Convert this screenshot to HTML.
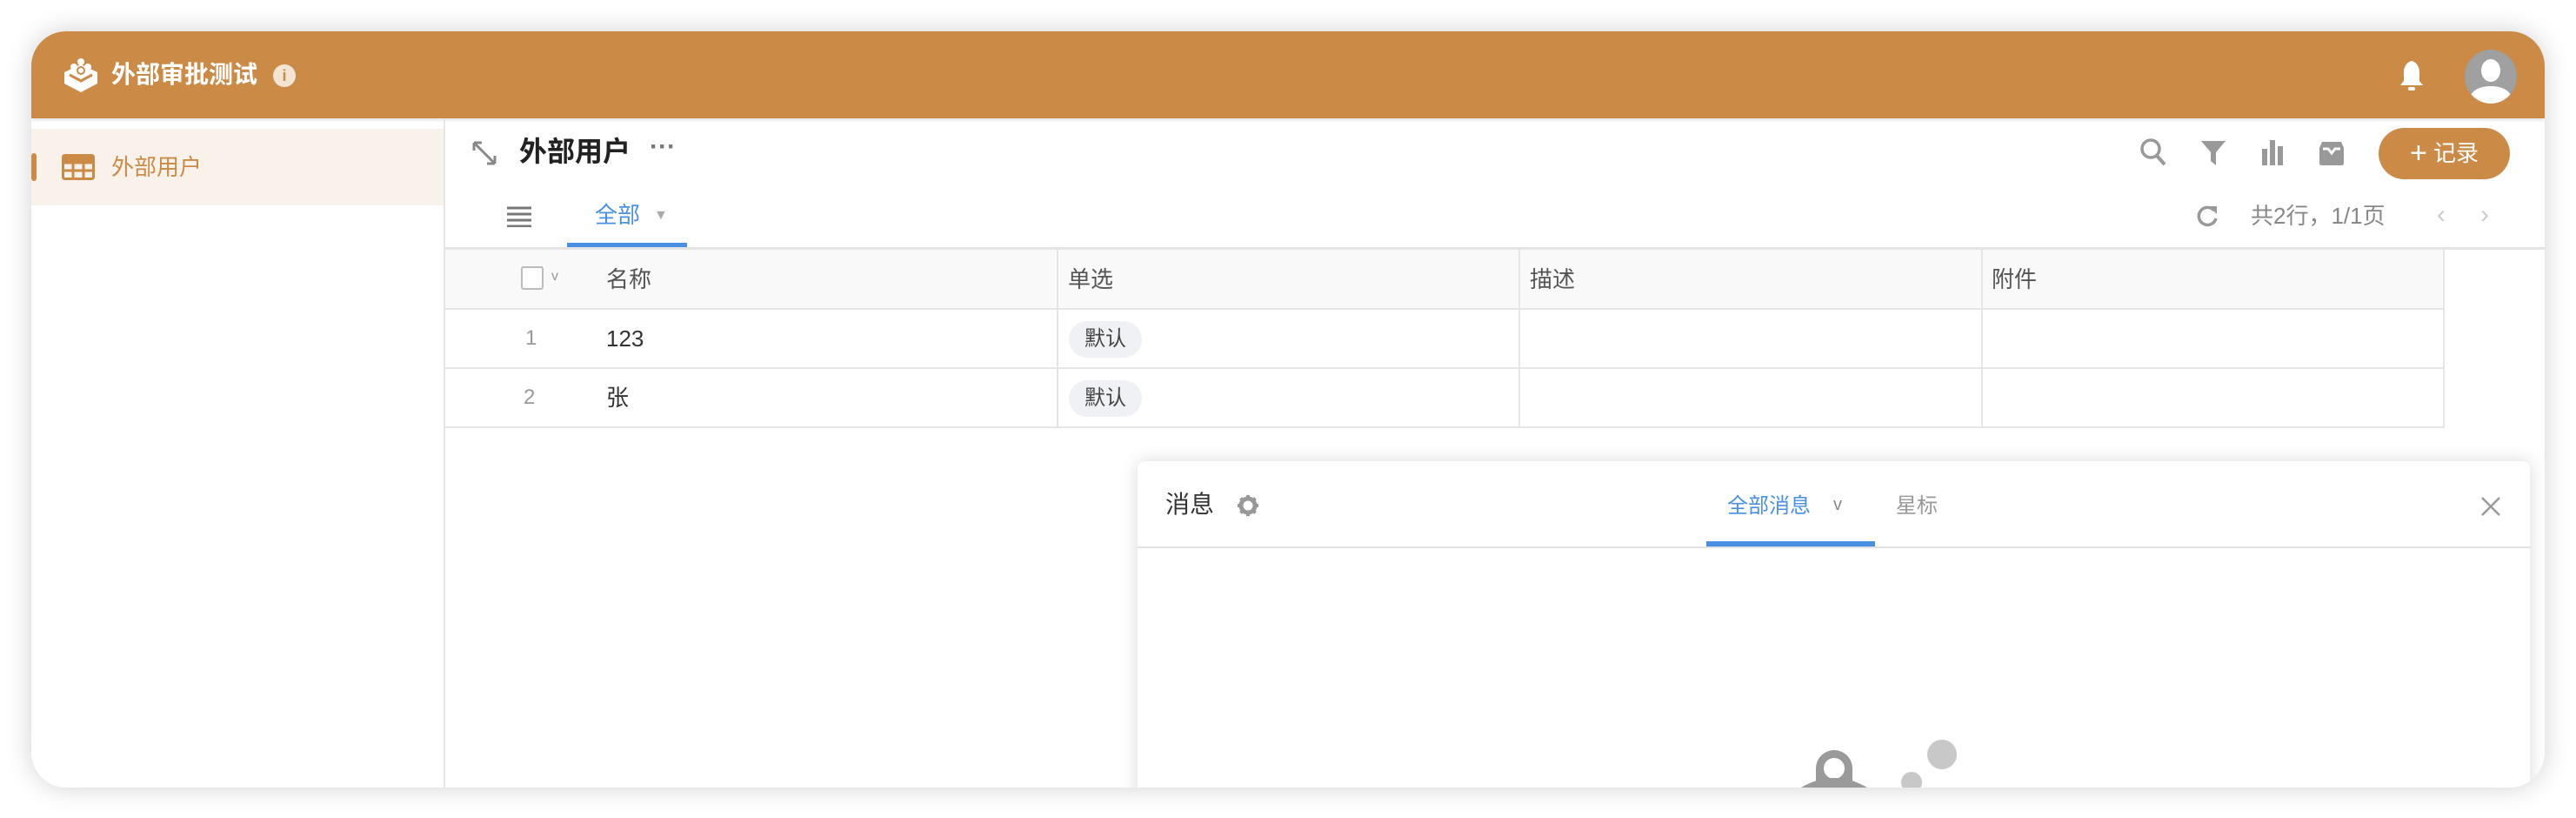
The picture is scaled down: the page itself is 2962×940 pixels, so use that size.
<!DOCTYPE html>
<html><head><meta charset="utf-8"><style>
*{box-sizing:border-box;margin:0;padding:0}
body{width:2962px;height:940px;background:#fff;position:relative;overflow:hidden;font-family:"Liberation Sans","Noto Sans CJK SC",sans-serif;}
.win{position:absolute;left:36px;top:36px;width:2890px;height:869px;border-radius:40px;overflow:hidden;background:#fff;box-shadow:0 0 30px rgba(0,0,0,0.18);}
.hdr{position:absolute;left:0;top:0;width:100%;height:100px;background:#CB8B47;box-shadow:0 2px 4px rgba(0,0,0,0.12);}
.abs{position:absolute}
.t{position:absolute;white-space:nowrap;line-height:1}
</style></head><body>
<div class="win">
 <div class="hdr">
  <svg class="abs" style="left:36px;top:30px" width="42" height="42" viewBox="0 0 42 42"><path d="M21 8 L40 17 L40 30 L21 40 L2 30 L2 17 Z" fill="#fff"/><path d="M8 20 L21 27 L34 20" stroke="#CB8B47" stroke-width="3" fill="none"/><circle cx="21" cy="5" r="4" fill="#fff"/><circle cx="13" cy="11" r="4" fill="#fff"/><circle cx="29" cy="11" r="4" fill="#fff"/><circle cx="21" cy="15" r="4" fill="#fff" stroke="#CB8B47" stroke-width="2"/></svg>
  <div class="t" style="left:92px;top:36px;font-size:28px;color:#fff;font-weight:bold">外部审批测试</div>
  <div class="abs" style="left:278px;top:38px;width:26px;height:26px;border-radius:50%;background:#f3e4d4;color:#CB8B47;font-size:18px;font-weight:bold;text-align:center;line-height:26px">i</div>
  <svg class="abs" style="left:2722px;top:32px" width="30" height="38" viewBox="0 0 30 38"><path d="M15 2 C8 4 6 10 6 16 L6 25 L2 30 L28 30 L24 25 L24 16 C24 10 22 4 15 2Z" fill="#fff"/><rect x="11" y="32" width="8" height="4" rx="2" fill="#fff"/></svg>
  <svg class="abs" style="left:2798px;top:21px" width="60" height="62" viewBox="0 0 60 62"><ellipse cx="30" cy="31" rx="30" ry="31" fill="#a0a0a0"/><clipPath id="c"><ellipse cx="30" cy="31" rx="30" ry="31"/></clipPath><g clip-path="url(#c)" fill="#fff"><ellipse cx="30" cy="24" rx="11" ry="13"/><path d="M4 58 C8 46 18 42 30 42 C42 42 52 46 56 58 L56 70 L4 70Z"/></g></svg>
 </div>
 <div class="abs" style="left:0;top:112px;width:474px;height:88px;background:#f9f2ea"></div>
 <div class="abs" style="left:0;top:140px;width:6px;height:32px;background:#CB8B47;border-radius:3px"></div>
 <svg class="abs" style="left:35px;top:141px" width="38" height="30" viewBox="0 0 38 30"><rect x="1.5" y="1.5" width="35" height="27" rx="2" fill="none" stroke="#CB8B47" stroke-width="3"/><path d="M1 10H37M1 19H37M13 10V29M25 10V29" stroke="#CB8B47" stroke-width="3"/><rect x="1" y="1" width="36" height="9" fill="#CB8B47"/></svg>
 <div class="t" style="left:92px;top:143px;font-size:26px;color:#CB8B47">外部用户</div>
 <div class="abs" style="left:474px;top:100px;width:2px;height:769px;background:#e6e6e6"></div>
 <svg class="abs" style="left:505px;top:124px" width="32" height="32" viewBox="0 0 32 32"><path d="M4 4L28 28M4 4V13M4 4H13M28 28V19M28 28H19" stroke="#888" stroke-width="3" fill="none"/></svg>
 <div class="t" style="left:561px;top:122px;font-size:32px;color:#222;font-weight:bold">外部用户</div>
 <div class="t" style="left:711px;top:118px;font-size:30px;color:#777;font-weight:bold">···</div>
 <svg class="abs" style="left:2424px;top:122px" width="32" height="34" viewBox="0 0 32 34"><circle cx="13" cy="13" r="10" stroke="#999" stroke-width="3.5" fill="none"/><path d="M20 21L29 31" stroke="#999" stroke-width="4"/></svg>
 <svg class="abs" style="left:2494px;top:125px" width="30" height="30" viewBox="0 0 30 30"><path d="M1 1H29L18 14V29L12 24V14Z" fill="#999"/></svg>
 <svg class="abs" style="left:2564px;top:124px" width="26" height="30" viewBox="0 0 26 30"><rect x="1" y="11" width="6" height="19" fill="#999"/><rect x="10" y="1" width="6" height="29" fill="#999"/><rect x="19" y="8" width="6" height="22" fill="#999"/></svg>
 <svg class="abs" style="left:2630px;top:126px" width="30" height="28" viewBox="0 0 30 28"><path d="M4 1H26L29 8V26Q29 28 26 28H4Q1 28 1 26V8Z" fill="#999"/><path d="M5 9H11L15 14L19 9H25" stroke="#fff" stroke-width="3" fill="none"/></svg>
 <div class="abs" style="left:2699px;top:111px;width:151px;height:59px;border-radius:30px;background:#CB8B47;color:#fff;font-size:26px;line-height:59px;text-align:center"><span style="font-size:34px;vertical-align:-2px">+</span> 记录</div>
 <svg class="abs" style="left:547px;top:201px" width="28" height="24" viewBox="0 0 28 24"><path d="M0 2H28M0 9H28M0 16H28M0 23H28" stroke="#777" stroke-width="3"/></svg>
 <div class="t" style="left:648px;top:198px;font-size:26px;color:#4A90E2">全部</div>
 <div class="t" style="left:716px;top:204px;font-size:16px;color:#aaa">▼</div>
 <div class="abs" style="left:616px;top:243px;width:138px;height:6px;background:#4A90E2"></div>
 <svg class="abs" style="left:2488px;top:198px" width="28" height="28" viewBox="0 0 28 28"><path d="M22 8A10 10 0 1 0 24 17" stroke="#999" stroke-width="3.5" fill="none"/><path d="M16 3H25V12Z" fill="#999"/></svg>
 <div class="t" style="left:2552px;top:199px;font-size:26px;color:#888">共2行，1/1页</div>
 <div class="t" style="left:2766px;top:196px;font-size:30px;color:#ccc">&lsaquo;</div>
 <div class="t" style="left:2816px;top:196px;font-size:30px;color:#ccc">&rsaquo;</div>
 <div class="abs" style="left:476px;top:248px;width:2414px;height:3px;background:#e4e4e4"></div>
 <div class="abs" style="left:476px;top:251px;width:2297px;height:68px;background:#f9f9f9"></div>
 <div class="abs" style="left:476px;top:318px;width:2297px;height:2px;background:#e6e6e6"></div>
 <div class="abs" style="left:476px;top:386px;width:2297px;height:2px;background:#e6e6e6"></div>
 <div class="abs" style="left:476px;top:454px;width:2297px;height:2px;background:#e6e6e6"></div>
 <div class="abs" style="left:1179px;top:251px;width:2px;height:205px;background:#e6e6e6"></div>
 <div class="abs" style="left:1710px;top:251px;width:2px;height:205px;background:#e6e6e6"></div>
 <div class="abs" style="left:2242px;top:251px;width:2px;height:205px;background:#e6e6e6"></div>
 <div class="abs" style="left:2773px;top:251px;width:2px;height:205px;background:#e6e6e6"></div>
 <div class="abs" style="left:563px;top:270px;width:26px;height:27px;border:2px solid #bbb;border-radius:3px;background:#fff"></div>
 <div class="t" style="left:598px;top:274px;font-size:16px;color:#999">v</div>
 <div class="t" style="left:661px;top:272px;font-size:26px;color:#555">名称</div>
 <div class="t" style="left:1192px;top:272px;font-size:26px;color:#555">单选</div>
 <div class="t" style="left:1723px;top:272px;font-size:26px;color:#555">描述</div>
 <div class="t" style="left:2254px;top:272px;font-size:26px;color:#555">附件</div>
 <div class="t" style="left:568px;top:341px;font-size:24px;color:#999">1</div>
 <div class="t" style="left:661px;top:340px;font-size:26px;color:#333">123</div>
 <div class="t" style="left:566px;top:409px;font-size:24px;color:#999">2</div>
 <div class="t" style="left:661px;top:408px;font-size:26px;color:#333">张</div>
 <div class="abs" style="left:1193px;top:333px;width:84px;height:42px;border-radius:21px;background:#f0f1f4;font-size:24px;color:#444;text-align:center;line-height:42px">默认</div>
 <div class="abs" style="left:1193px;top:401px;width:84px;height:42px;border-radius:21px;background:#f0f1f4;font-size:24px;color:#444;text-align:center;line-height:42px">默认</div>
 <div class="abs" style="left:1272px;top:494px;width:1601px;height:400px;background:#fff;border-radius:8px;box-shadow:0 0 20px rgba(0,0,0,0.15);overflow:hidden">
  <div class="t" style="left:32px;top:36px;font-size:28px;color:#333">消息</div>
  <svg class="abs" style="left:114px;top:38px" width="26" height="26" viewBox="0 0 26 26"><circle cx="13" cy="13" r="8" fill="none" stroke="#999" stroke-width="5"/><path d="M13 1V6M13 20V25M1 13H6M20 13H25M4.5 4.5L8 8M18 18L21.5 21.5M4.5 21.5L8 18M18 8L21.5 4.5" stroke="#999" stroke-width="4"/></svg>
  <div class="t" style="left:678px;top:40px;font-size:24px;color:#4A90E2">全部消息</div>
  <div class="t" style="left:800px;top:40px;font-size:20px;color:#888">v</div>
  <div class="t" style="left:872px;top:40px;font-size:24px;color:#999">星标</div>
  <svg class="abs" style="left:1544px;top:40px" width="24" height="24" viewBox="0 0 24 24"><path d="M2 2L22 22M22 2L2 22" stroke="#999" stroke-width="2.5"/></svg>
  <div class="abs" style="left:654px;top:92px;width:194px;height:6px;background:#4A90E2"></div>
  <div class="abs" style="left:0;top:98px;width:100%;height:2px;background:#e2e2e2"></div>
  <svg class="abs" style="left:740px;top:310px" width="220" height="90" viewBox="0 0 220 90"><path d="M40 43 A21 21 0 0 1 82 43 L82 70 L40 70Z" fill="#9a9a9a"/><circle cx="61" cy="43" r="12" fill="#fff"/><path d="M15 70 Q61 38 107 70 L107 90 L15 90Z" fill="#9a9a9a"/><circle cx="185" cy="27" r="17" fill="#c8c8c8"/><circle cx="150" cy="59" r="12" fill="#c8c8c8"/></svg>
 </div>
</div>
</body></html>
